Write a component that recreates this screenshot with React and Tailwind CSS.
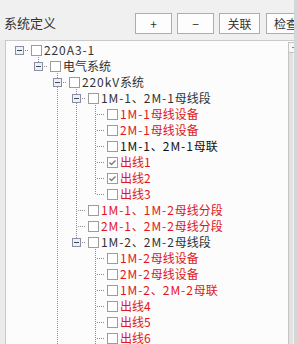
import React from 'react';

// 系统定义 tree panel
const RED = 'text-[#e0161b]';

const data = {
  label: '220A3-1',
  kids: [
    {
      label: '电气系统',
      kids: [
        {
          label: '220kV系统',
          more: true,
          kids: [
            {
              label: '1M-1、2M-1母线段',
              kids: [
                { label: '1M-1母线设备', red: true },
                { label: '2M-1母线设备', red: true },
                { label: '1M-1、2M-1母联', black: true },
                { label: '出线1', red: true, checked: true },
                { label: '出线2', red: true, checked: true },
                { label: '出线3', red: true },
              ],
            },
            { label: '1M-1、1M-2母线分段', red: true },
            { label: '2M-1、2M-2母线分段', red: true },
            {
              label: '1M-2、2M-2母线段',
              kids: [
                { label: '1M-2母线设备', red: true },
                { label: '2M-2母线设备', red: true },
                { label: '1M-2、2M-2母联', red: true },
                { label: '出线4', red: true },
                { label: '出线5', red: true },
                { label: '出线6', red: true, more: true },
              ],
            },
          ],
        },
      ],
    },
  ],
};

const flatten = (node, level, guides, isLast, out) => {
  out.push({ node, level, guides, isLast });
  const kids = node.kids || [];
  kids.forEach((c, i) =>
    flatten(c, level + 1, [...guides, level > 0 && !isLast], i === kids.length - 1 && !c.more, out)
  );
  return out;
};

const rows = flatten(data, 0, [], true, []);

const DOT = { stroke: '#8c8c8c', strokeWidth: 1, strokeDasharray: '1 1', shapeRendering: 'crispEdges' };

const Guide = ({ on }) => (
  <svg width="19" height="16" className="shrink-0">
    {on && <line x1="9.5" y1="0" x2="9.5" y2="16" {...DOT} />}
  </svg>
);

const Connector = ({ level, kids, isLast }) => (
  <svg width="19" height="16" className="shrink-0">
    {level > 0 && <line x1="9.5" y1="0" x2="9.5" y2={kids ? 5 : 10} {...DOT} />}
    {level > 0 && !isLast && <line x1="9.5" y1={kids ? 14 : 10} x2="9.5" y2="16" {...DOT} />}
    <line x1={kids ? 15 : 11} y1="9.5" x2="19" y2="9.5" {...DOT} />
    {kids && (
      <g shapeRendering="crispEdges">
        <rect x="5.5" y="5.5" width="8" height="8" fill="#eef0f4" stroke="#8a8fa0" />
        <line x1="7" y1="9.5" x2="12" y2="9.5" stroke="#3c4a6a" />
      </g>
    )}
  </svg>
);

const Check = ({ checked }) => (
  <div className="ml-[2px] mt-[4px] flex h-[11px] w-[11px] shrink-0 items-center justify-center border border-[#9c9c9c] bg-white">
    {checked && (
      <svg width="9" height="9">
        <path d="M1.5 4.5 L3.5 6.5 L7.5 2.5" fill="none" stroke="#777" strokeWidth="1.3" />
      </svg>
    )}
  </div>
);

// latin runs are a touch wider in the original UI font
const Label = ({ text }) =>
  text.split(/([\x20-\x7e]+)/).map((part, i) =>
    /[\x20-\x7e]/.test(part) ? (
      <span key={i} className="tracking-[0.9px]">{part}</span>
    ) : (
      <span key={i}>{part}</span>
    )
  );

const Row = ({ node, level, guides, isLast }) => {
  const tone = node.red ? RED : node.black ? 'text-[#111]' : 'text-[#333]';
  return (
    <div className="flex h-4">
      {guides.map((g, j) => (
        <Guide key={j} on={g} />
      ))}
      <Connector level={level} kids={!!node.kids} isLast={isLast} />
      <Check checked={node.checked} />
      <span className={`ml-[2px] whitespace-nowrap text-[12px] leading-[17px] ${tone}`}>
        <Label text={node.label} />
      </span>
    </div>
  );
};

const Btn = ({ children, w, extra = '' }) => (
  <button className={`flex h-[21px] shrink-0 items-center justify-center border border-[#adadad] bg-[#fdfdfd] text-[12px] text-[#333] ${w} ${extra}`}>
    {children}
  </button>
);

export default function App() {
  return (
    <div className="flex h-[344px] w-[298px] overflow-hidden bg-[#f0f0f0] font-['Noto_Sans_CJK_SC',sans-serif]">
      <div className="flex w-[294px] shrink-0 flex-col overflow-hidden">
        <header className="flex h-10 shrink-0 items-start">
          <span className="ml-1 mt-[15px] w-[131px] shrink-0 text-[13px] leading-4 text-[#333]">系统定义</span>
          <div className="mt-[13px] flex gap-[5px]">
            <Btn w="w-[37px]">+</Btn>
            <Btn w="w-[37px]">−</Btn>
            <Btn w="w-[41px]">关联</Btn>
            <Btn w="w-[40px]" extra="ml-px">检查</Btn>
          </div>
        </header>
        <div className="flex min-h-0 flex-1 bg-[#ebebeb] pl-[5px]">
          <div className="flex min-w-0 flex-1 border-l border-t border-[#c9c9c9] bg-[#fcfcfc]">
            <div className="min-w-0 flex-1 overflow-hidden pl-1">
              {rows.map((r, i) => (
                <Row key={i} {...r} />
              ))}
            </div>
            <div className="mt-px flex w-[6px] shrink-0 flex-col border-l border-t border-[#c4c4c4]">
              <div className="flex h-[10px] items-center justify-end border-b border-[#c4c4c4] bg-[#f6f6f6]">
                <div className="h-px w-[2px] bg-[#888]" />
              </div>
              <div className="flex-1 border-r border-[#f5f5f5] bg-[#e2e2e2]" />
            </div>
          </div>
        </div>
      </div>
      <div className="w-1 shrink-0 bg-[#d6d6d6]" />
    </div>
  );
}
